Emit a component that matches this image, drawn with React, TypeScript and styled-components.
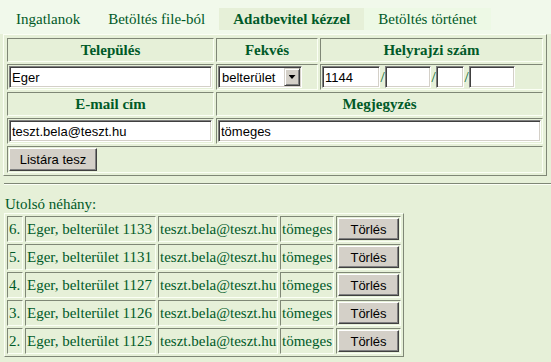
import React from 'react';
import styled, { createGlobalStyle } from 'styled-components';

const DARK = '#7f8776';
const LIGHT = '#fbfff5';
const PANEL = '#e6f0d8';
const GREEN = '#005a28';

const GlobalStyle = createGlobalStyle`
	html, body {
		margin: 0;
		padding: 0;
	}
	body {
		background: ${PANEL};
		font-family: 'Liberation Serif', 'Times New Roman', serif;
		font-size: 15px;
		color: ${GREEN};
	}
	* {
		box-sizing: border-box;
	}
`;

const TabBar = styled.nav`
	display: flex;
	padding: 8px 0 4px 2px;
	background: #f1f9eb;
`;

const Tab = styled.div<{ $active?: boolean; $tint?: boolean }>`
	height: 22px;
	line-height: 22px;
	padding: 0 14px;
	white-space: nowrap;
	font-weight: ${(p) => (p.$active ? 'bold' : 'normal')};
	background: ${(p) => (p.$active ? PANEL : p.$tint ? '#edf9e5' : 'transparent')};
`;

const Panel = styled.form`
	margin-left: 3px;
	width: max-content;
	display: grid;
	grid-template-columns: 207px 102px 223px;
	gap: 2px;
	padding: 3px 3px 2px 3px;
	border: 1px solid;
	border-color: ${LIGHT} ${DARK} ${DARK} ${LIGHT};
`;

const Cell = styled.div<{ $span?: number }>`
	grid-column: span ${(p) => p.$span ?? 1};
	display: flex;
	align-items: center;
	padding: 1px;
	white-space: nowrap;
	border: 1px solid;
	border-color: ${DARK} ${LIGHT} ${LIGHT} ${DARK};
`;

const HeadCell = styled(Cell)`
	justify-content: center;
	padding: 2px 1px;
	line-height: 18px;
	font-weight: bold;
`;

const TextInput = styled.input<{ $w?: number }>`
	width: ${(p) => (p.$w ? `${p.$w}px` : '100%')};
	height: 22px;
	margin: 0;
	padding: 0 2px;
	font: 13px 'Liberation Sans', Arial, sans-serif;
	color: #000;
	background: #fff;
	border: 1px solid;
	border-color: #808080 #fff #fff #808080;
	box-shadow: inset 1px 1px #404040, inset -1px -1px #d4d0c8;
	outline: none;
`;

const Slash = styled.span`
	width: 5px;
	text-align: center;
	line-height: 22px;
`;

const SelectWrap = styled.div`
	position: relative;
	width: 84px;
	height: 22px;
`;

const Select = styled.select`
	appearance: none;
	width: 100%;
	height: 100%;
	margin: 0;
	padding: 0 18px 0 3px;
	font: 13px 'Liberation Sans', Arial, sans-serif;
	color: #000;
	background: #fff;
	border: 1px solid;
	border-color: #808080 #fff #fff #808080;
	box-shadow: inset 1px 1px #404040, inset -1px -1px #d4d0c8;
	border-radius: 0;
	outline: none;
`;

const Arrow = styled.span`
	position: absolute;
	top: 2px;
	right: 2px;
	width: 16px;
	height: 18px;
	background: #d4d0c8;
	border: 1px solid;
	border-color: #d4d0c8 #404040 #404040 #d4d0c8;
	box-shadow: inset 1px 1px #fff, inset -1px -1px #808080;
	pointer-events: none;
	display: flex;
	align-items: center;
	justify-content: center;

	&::after {
		content: '';
		width: 7px;
		height: 4px;
		background: #000;
		clip-path: polygon(0 0, 100% 0, 50% 100%);
	}
`;

const Button = styled.button<{ $w?: number; $h?: number }>`
	width: ${(p) => (p.$w ? `${p.$w}px` : '100%')};
	height: ${(p) => p.$h ?? 22}px;
	margin: 0;
	padding: 0;
	font: 13px 'Liberation Sans', Arial, sans-serif;
	color: #000;
	background: #d4d0c8;
	border: 1px solid;
	border-color: #fff #404040 #404040 #fff;
	box-shadow: inset -1px -1px #808080;
	cursor: pointer;
`;

const Rule = styled.hr`
	margin: 7px 0 0 4px;
	height: 0;
	border: none;
	border-top: 1px solid ${DARK};
	border-bottom: 1px solid ${LIGHT};
`;

const Caption = styled.div`
	margin: 11px 0 0 5px;
	line-height: 17px;
`;

const ListGrid = styled.div`
	margin-left: 4px;
	width: max-content;
	display: grid;
	grid-template-columns: 16px 131px 120px 54px 65px;
	gap: 2px;
	padding: 2px;
	border: 1px solid;
	border-color: ${LIGHT} ${DARK} ${DARK} ${LIGHT};
`;

const ListCell = styled(Cell)`
	line-height: 17px;
	overflow: visible;
`;

const recent = [
	{ n: 6, hrsz: 1133 },
	{ n: 5, hrsz: 1131 },
	{ n: 4, hrsz: 1127 },
	{ n: 3, hrsz: 1126 },
	{ n: 2, hrsz: 1125 },
];

const App = () => {
	const handleSubmit: React.FormEventHandler<HTMLFormElement> = (e) => {
		e.preventDefault();
	};

	return (
		<>
			<GlobalStyle />
			<TabBar>
				<Tab>Ingatlanok</Tab>
				<Tab>Betöltés file-ból</Tab>
				<Tab $active>Adatbevitel kézzel</Tab>
				<Tab $tint>Betöltés történet</Tab>
			</TabBar>

			<Panel onSubmit={handleSubmit}>
				<HeadCell>Település</HeadCell>
				<HeadCell>Fekvés</HeadCell>
				<HeadCell>Helyrajzi szám</HeadCell>

				<Cell>
					<TextInput defaultValue="Eger" />
				</Cell>
				<Cell>
					<SelectWrap>
						<Select defaultValue="belterület">
							<option>belterület</option>
							<option>külterület</option>
						</Select>
						<Arrow />
					</SelectWrap>
				</Cell>
				<Cell>
					<TextInput $w={58} defaultValue="1144" />
					<Slash>/</Slash>
					<TextInput $w={46} />
					<Slash>/</Slash>
					<TextInput $w={28} />
					<Slash>/</Slash>
					<TextInput $w={46} />
				</Cell>

				<HeadCell>E-mail cím</HeadCell>
				<HeadCell $span={2}>Megjegyzés</HeadCell>

				<Cell>
					<TextInput defaultValue="teszt.bela@teszt.hu" />
				</Cell>
				<Cell $span={2}>
					<TextInput defaultValue="tömeges" />
				</Cell>

				<Cell $span={3}>
					<Button type="submit" $w={88} $h={23}>
						Listára tesz
					</Button>
				</Cell>
			</Panel>

			<Rule />
			<Caption>Utolsó néhány:</Caption>

			<ListGrid>
				{recent.map((r) => (
					<React.Fragment key={r.n}>
						<ListCell>{r.n}.</ListCell>
						<ListCell>Eger, belterület {r.hrsz}</ListCell>
						<ListCell>teszt.bela@teszt.hu</ListCell>
						<ListCell>tömeges</ListCell>
						<ListCell>
							<Button type="button">Törlés</Button>
						</ListCell>
					</React.Fragment>
				))}
			</ListGrid>
		</>
	);
};

export default App;
